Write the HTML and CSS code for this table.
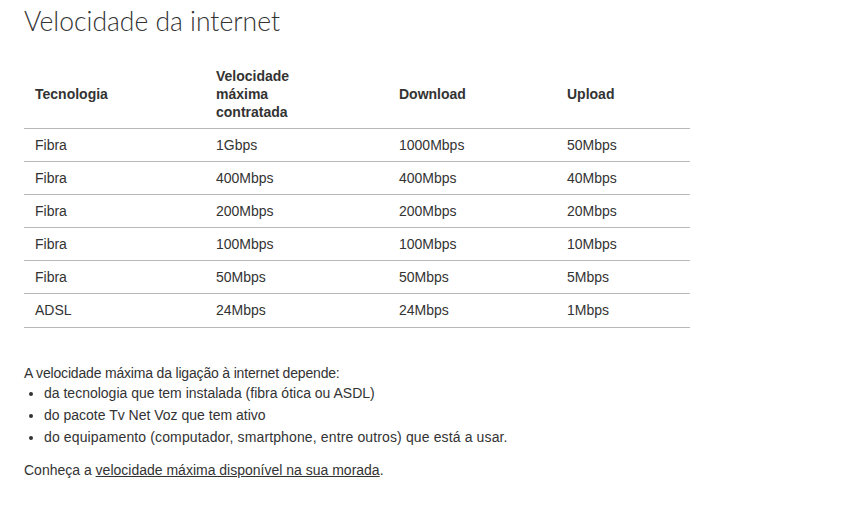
FILE: index.html
```html
<!DOCTYPE html>
<html lang="pt">
<head>
<meta charset="utf-8">
<link rel="stylesheet" href="styles.css">
</head>
<body>
<main class="page">
  <h1 class="title">Velocidade da internet</h1>
  <table class="speeds">
    <thead>
      <tr>
        <th class="c1">Tecnologia</th>
        <th class="c2">Velocidade<br>máxima<br>contratada</th>
        <th class="c3">Download</th>
        <th class="c4">Upload</th>
      </tr>
    </thead>
    <tbody>
      <tr><td>Fibra</td><td>1Gbps</td><td>1000Mbps</td><td>50Mbps</td></tr>
      <tr><td>Fibra</td><td>400Mbps</td><td>400Mbps</td><td>40Mbps</td></tr>
      <tr><td>Fibra</td><td>200Mbps</td><td>200Mbps</td><td>20Mbps</td></tr>
      <tr><td>Fibra</td><td>100Mbps</td><td>100Mbps</td><td>10Mbps</td></tr>
      <tr><td>Fibra</td><td>50Mbps</td><td>50Mbps</td><td>5Mbps</td></tr>
      <tr><td>ADSL</td><td>24Mbps</td><td>24Mbps</td><td>1Mbps</td></tr>
    </tbody>
  </table>
  <p class="intro">A velocidade máxima da ligação à internet depende:</p>
  <ul class="factors">
    <li>da tecnologia que tem instalada (fibra ótica ou ASDL)</li>
    <li>do pacote Tv Net Voz que tem ativo</li>
    <li class="long">do equipamento (computador, smartphone, entre outros) que está a usar.</li>
  </ul>
  <p class="more">Conheça a <a href="#" class="link">velocidade máxima disponível na sua morada</a>.</p>
</main>
</body>
</html>
```
FILE: styles.css
```css
html, body {
  margin: 0;
  padding: 0;
  background: #fff;
}
body {
  font-family: "Liberation Sans", Arial, sans-serif;
  font-size: 14px;
  color: #333;
}
.page {
  padding: 3px 24px 0 24px;
}
.title {
  font-family: Lato, "Open Sans", sans-serif;
  font-weight: 300;
  font-size: 26.5px;
  line-height: 36px;
  margin: 0 0 21px 0;
  color: #333;
}
.speeds {
  width: 666px;
  border-collapse: collapse;
}
.speeds th {
  text-align: left;
  font-weight: bold;
  line-height: 18px;
  padding: 7px 11px;
  border-bottom: 1px solid #b8b8b8;
  vertical-align: middle;
}
.speeds td {
  line-height: 18px;
  padding: 7px 11px;
  border-bottom: 1px solid #b8b8b8;
}
.speeds tbody tr:last-child td {
  padding-bottom: 8px;
}
.c1 { width: 159px; }
.c2 { width: 161px; }
.c3 { width: 146px; }
.intro {
  margin: 36px 0 0 0;
  line-height: 18px;
  letter-spacing: -0.18px;
}
.factors {
  margin: 0;
  padding-left: 20px;
}
.factors li {
  line-height: 22px;
}
.factors li.long {
  letter-spacing: 0.13px;
}
.more {
  margin: 13px 0 0 0;
  line-height: 18px;
}
.link {
  color: #333;
  text-decoration: underline;
}
```
